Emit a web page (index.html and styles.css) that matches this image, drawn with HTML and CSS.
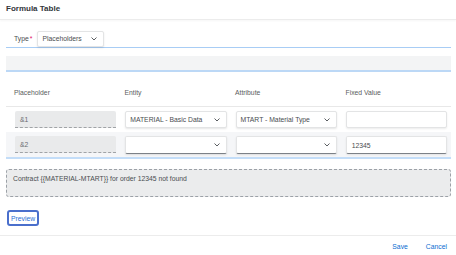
FILE: index.html
```html
<!DOCTYPE html>
<html lang="en">
<head>
    <meta charset="UTF-8">
    <title>Formula Table</title>
    <link rel="stylesheet" href="styles.css">
</head>
<body>
    <div class="dialog">
        <div class="dialog-header">Formula Table</div>

        <div class="dialog-content">
            <!-- Type selection -->
            <div class="type-bar">
                <span class="type-label">Type<span class="required">*</span></span>
                <div class="select type-select">
                    <span>Placeholders</span>
                    <svg class="chevron" width="6" height="4" viewBox="0 0 6 4"><path d="M0.5 0.5 L3 3 L5.5 0.5" fill="none" stroke="#5b5e62" stroke-width="1"/></svg>
                </div>
            </div>

            <div class="toolbar"></div>

            <!-- Placeholder table -->
            <div class="table-row table-head">
                <div>Placeholder</div>
                <div>Entity</div>
                <div>Attribute</div>
                <div>Fixed Value</div>
            </div>
            <div class="table-row">
                <div class="input readonly">&amp;1</div>
                <div class="select">
                    <span>MATERIAL - Basic Data</span>
                    <svg class="chevron" width="6" height="4" viewBox="0 0 6 4"><path d="M0.5 0.5 L3 3 L5.5 0.5" fill="none" stroke="#5b5e62" stroke-width="1"/></svg>
                </div>
                <div class="select">
                    <span>MTART - Material Type</span>
                    <svg class="chevron" width="6" height="4" viewBox="0 0 6 4"><path d="M0.5 0.5 L3 3 L5.5 0.5" fill="none" stroke="#5b5e62" stroke-width="1"/></svg>
                </div>
                <div class="input"></div>
            </div>
            <div class="table-row selected">
                <div class="input readonly">&amp;2</div>
                <div class="select edit">
                    <span></span>
                    <svg class="chevron" width="6" height="4" viewBox="0 0 6 4"><path d="M0.5 0.5 L3 3 L5.5 0.5" fill="none" stroke="#5b5e62" stroke-width="1"/></svg>
                </div>
                <div class="select edit">
                    <span></span>
                    <svg class="chevron" width="6" height="4" viewBox="0 0 6 4"><path d="M0.5 0.5 L3 3 L5.5 0.5" fill="none" stroke="#5b5e62" stroke-width="1"/></svg>
                </div>
                <div class="input edit">12345</div>
            </div>

            <!-- Result message -->
            <div class="message">Contract {{MATERIAL-MTART}} for order 12345 not found</div>

            <button class="preview">Preview</button>
        </div>

        <div class="dialog-footer">
            <button class="link">Save</button>
            <button class="link">Cancel</button>
        </div>
    </div>
</body>
</html>
```

FILE: styles.css
```css
body {
    margin: 0;
    font-family: "Liberation Sans", Arial, sans-serif;
    font-size: 6.8px;
    color: #32363a;
    background: #fff;
}
.dialog {
    width: 456px;
    height: 255px;
    display: flex;
    flex-direction: column;
}
.dialog-header {
    height: 19px;
    line-height: 17px;
    padding: 0 6px;
    font-size: 8px;
    font-weight: bold;
    border-bottom: 1px solid #ececec;
    box-shadow: 0 1px 2px rgba(0, 0, 0, 0.04);
}
.dialog-content {
    flex: 1;
    padding: 0 5px 0 6px;
}
.type-bar {
    display: flex;
    align-items: center;
    height: 28px;
    padding: 10px 0 0 8px;
    box-sizing: border-box;
    border-bottom: 1px solid #a8cdf5;
}
.type-label {
    color: #4a4d50;
    margin-right: 5px;
}
.required {
    color: #e0166a;
    margin-left: 1px;
}
.select {
    display: flex;
    align-items: center;
    justify-content: space-between;
    height: 17px;
    padding: 0 6px 0 4px;
    box-sizing: border-box;
    background: #fff;
    border: 1px solid #e3e4e5;
    border-radius: 2px;
    box-shadow: 0 1px 2px rgba(0, 0, 0, 0.1);
    color: #4a4d50;
}
.type-select {
    width: 67px;
    height: 16px;
}
.chevron {
    flex: none;
}
.toolbar {
    height: 14px;
    margin-top: 8px;
    background: #f3f4f5;
    border-bottom: 2px solid #bcd8f6;
}
.table-row {
    display: grid;
    grid-template-columns: repeat(4, 1fr);
    gap: 9px;
    padding: 4px 4px 4px 9px;
}
.table-head {
    padding: 16px 4px 8px 8px;
    line-height: 10px;
    color: #5a5d60;
    border-bottom: 1px solid #e8e8e8;
}
.input {
    height: 17px;
    line-height: 17px;
    padding: 0 5px;
    box-sizing: border-box;
    background: #fff;
    border: 1px solid #e3e4e5;
    border-radius: 2px;
    box-shadow: 0 1px 2px rgba(0, 0, 0, 0.08);
    color: #4a4d50;
}
.input.readonly {
    background: #e9eaeb;
    border: none;
    border-bottom: 1px dashed #a0a3a6;
    border-radius: 2px 2px 0 0;
    box-shadow: none;
    color: #6a6d70;
}
.selected {
    background: #f5f6f8;
    padding: 4px 4px 3px 9px;
    border-bottom: 2px solid #c3ddf8;
}
.edit {
    border-bottom: 1px solid #7c8187;
    height: 18px;
    line-height: 17px;
}
.message {
    margin-top: 10px;
    height: 28px;
    padding: 5px 6px;
    box-sizing: border-box;
    background: #ebeced;
    border: 1px dashed #9ca1a7;
    border-radius: 3px;
    color: #4a4d50;
}
button {
    font-family: "Liberation Sans", Arial, sans-serif;
    font-size: 6.8px;
    cursor: pointer;
}
.preview {
    display: block;
    margin: 13px 0 0 1px;
    width: 32px;
    height: 16px;
    padding: 0;
    background: #fff;
    color: #2b6fd4;
    border: 2px solid #4a6fcc;
    border-radius: 3px;
}
.dialog-footer {
    display: flex;
    justify-content: flex-end;
    align-items: center;
    gap: 14px;
    height: 18px;
    padding: 1px 7px 0 0;
    border-top: 1px solid #ececec;
}
.link {
    background: none;
    border: none;
    padding: 0 2px;
    color: #0a6ed1;
}
```
